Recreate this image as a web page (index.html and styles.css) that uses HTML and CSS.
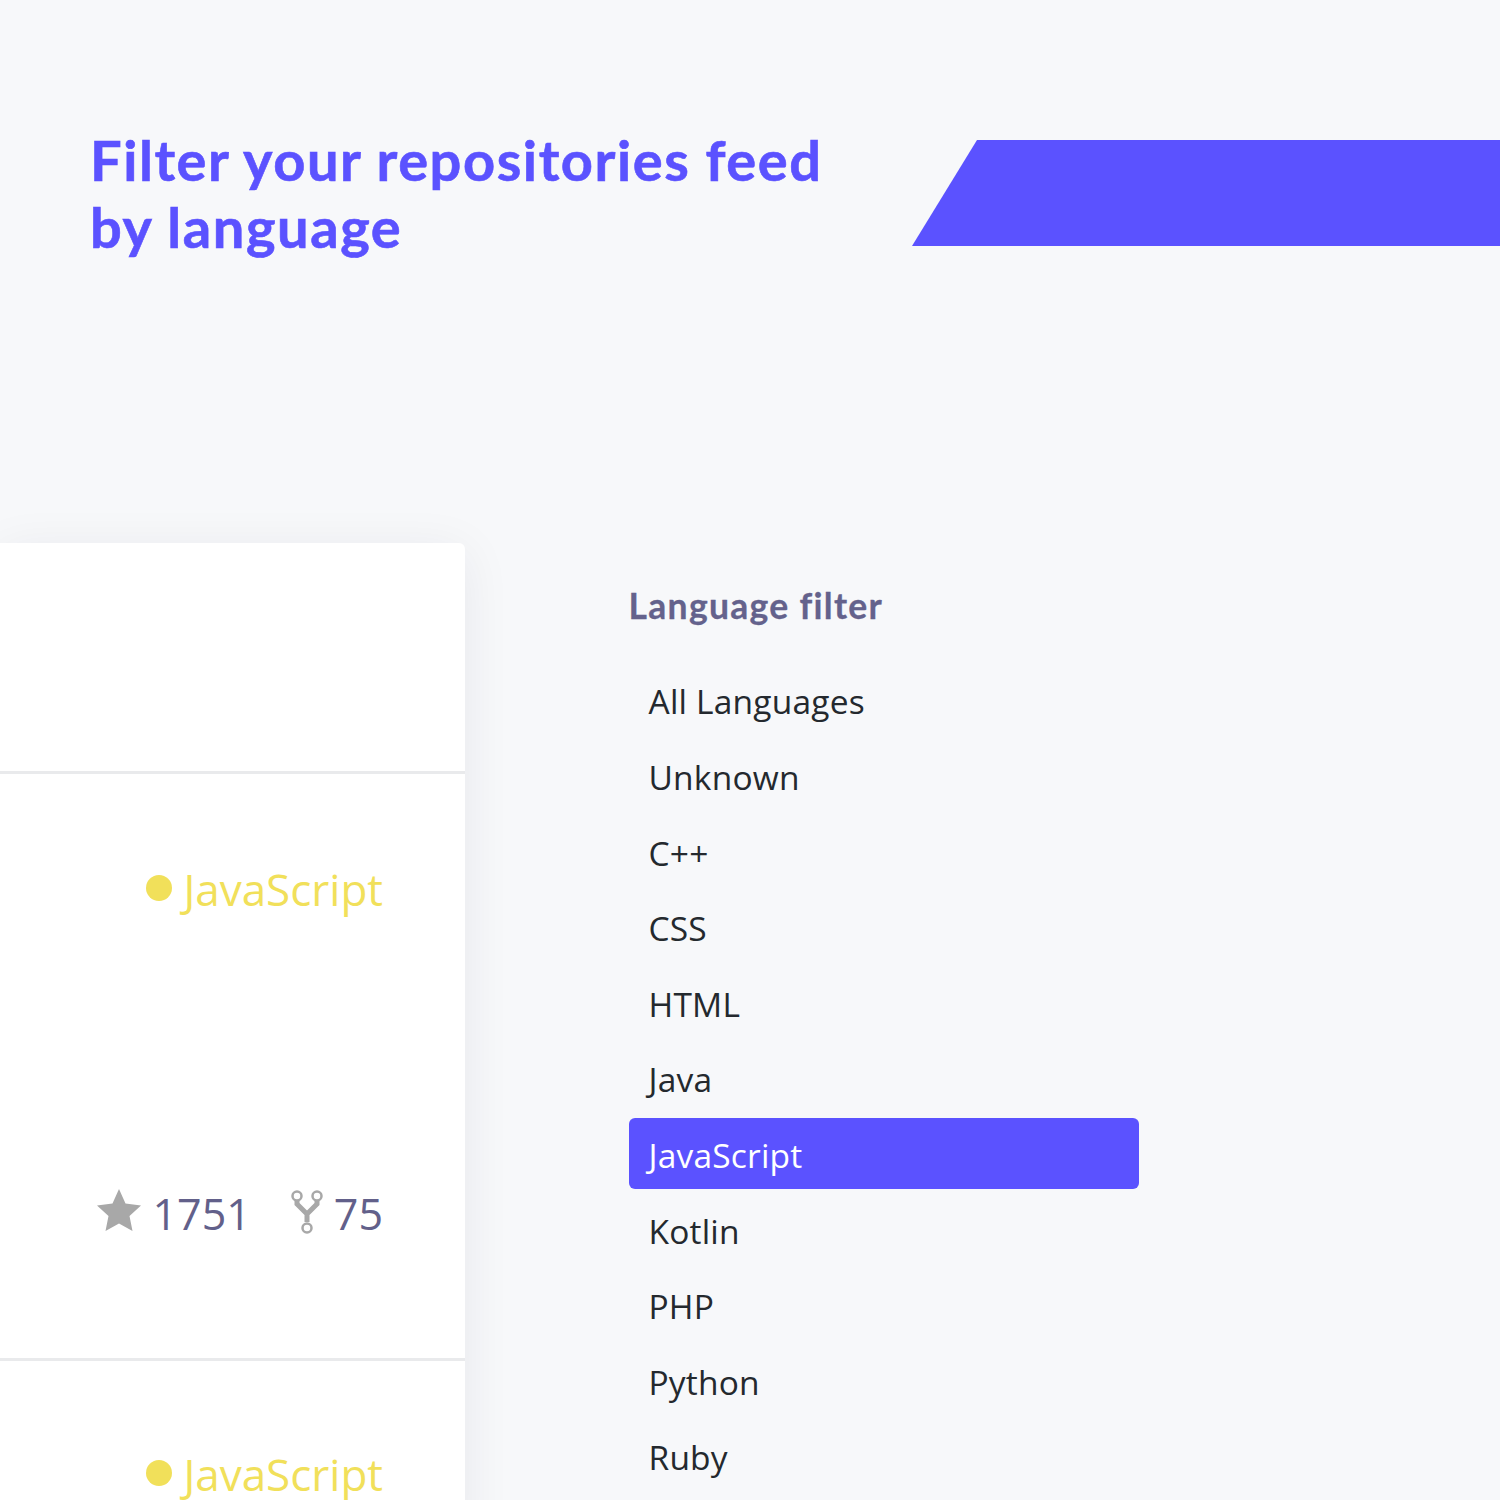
FILE: index.html
```html
<!DOCTYPE html>
<html lang="en">
<head>
<meta charset="utf-8">
<title>Filter by language</title>
<link rel="stylesheet" href="styles.css">
</head>
<body>
<div class="page">
  <header class="hero">
    <h1 class="title">Filter your repositories feed<br>by language</h1>
    <div class="ribbon"></div>
  </header>
  <main class="content">
    <section class="card">
      <div class="row row-first"></div>
      <div class="row row-repo">
        <div class="lang"><span class="dot"></span><span>JavaScript</span></div>
        <div class="stats">
          <svg class="star" viewBox="0 0 44 42" width="44" height="42"><path d="M22 0l6.5 14.5L44 16.5 32.5 27l3 15L22 34.5 8.5 42l3-15L0 16.5l15.500-2z"/></svg>
          <span class="num">1751</span>
          <svg class="fork" viewBox="0 0 32 44" width="32" height="44" fill="none"><path class="fork-stem" d="M6 11v3l10 10 10-10v-3M16 24v8"/><circle cx="6" cy="6" r="4.500"/><circle cx="26" cy="6" r="4.500"/><circle cx="16" cy="38" r="4.500"/></svg>
          <span class="num">75</span>
        </div>
      </div>
      <div class="row row-last">
        <div class="lang"><span class="dot"></span><span>JavaScript</span></div>
      </div>
    </section>
    <aside class="filter">
      <h2 class="filter-title">Language filter</h2>
      <ul class="list">
        <li class="item">All Languages</li>
        <li class="item">Unknown</li>
        <li class="item">C++</li>
        <li class="item">CSS</li>
        <li class="item">HTML</li>
        <li class="item">Java</li>
        <li class="item active">JavaScript</li>
        <li class="item">Kotlin</li>
        <li class="item">PHP</li>
        <li class="item">Python</li>
        <li class="item">Ruby</li>
      </ul>
    </aside>
  </main>
</div>
</body>
</html>
```
FILE: styles.css
```css
* { box-sizing: border-box; }
html, body { margin: 0; padding: 0; }
body { background: #f7f8fa; width: 1500px; height: 1500px; overflow: hidden; font-family: "Open Sans", "Noto Sans", sans-serif; }
.page { width: 1500px; height: 1500px; overflow: hidden; }
.hero { height: 543px; padding: 126px 0 0 90px; display: flex; align-items: flex-start; }
.title { margin: 0; width: 822px; flex: none; font-family: Lato, "Noto Sans", sans-serif; font-size: 56px; letter-spacing: 1.55px; -webkit-text-stroke: .6px #5b52ff; line-height: 67px; font-weight: 700; color: #5b52ff; }
.ribbon { margin-top: 14px; flex: 1; height: 106px; background: #5b52ff; clip-path: polygon(65px 0, 100% 0, 100% 100%, 0 100%); }
.content { display: flex; align-items: flex-start; }
.card { width: 465px; height: 1000px; background: #fff; border-top-right-radius: 6px; box-shadow: 0 8px 50px rgba(20,20,50,.07); flex: none; }
.row { border-bottom: 3px solid #e9eaec; padding-right: 82px; display: flex; flex-direction: column; align-items: flex-end; }
.row-first { height: 231px; }
.row-repo { height: 587px; }
.row-last { border-bottom: 0; }
.lang { display: flex; align-items: center; gap: 11px; color: #f1e05a; font-size: 44px; line-height: 60px; margin-top: 85px; }
.row-last .lang { margin-top: 83px; }
.dot { width: 26px; height: 26px; border-radius: 50%; background: #f1e05a; margin-bottom: 3px; }
.stats { display: flex; align-items: center; margin-top: 265px; color: #62608a; }
.num { font-size: 43px; line-height: 60px; }
.star { fill: #a8a8a8; margin: 0 11px 8px 0; }
.fork { stroke: #a8a8a8; stroke-width: 2.5; margin: 0 11px 4px 40px; }
.fork-stem { stroke-width: 5; }
.filter { margin-left: 163.500px; width: 510.500px; padding-top: 40px; }
.filter-title { margin: 0 0 35.500px; font-family: Lato, "Noto Sans", sans-serif; font-size: 35.500px; letter-spacing: 1.3px; -webkit-text-stroke: .3px #64628c; line-height: 46px; font-weight: 700; color: #64628c; }
.list { list-style: none; margin: 0; padding: 0; display: flex; flex-direction: column; gap: 5px; }
.item { height: 70.600px; padding: 1.900px 20px 0; font-size: 33.500px; letter-spacing: .2px; line-height: 70px; color: #24292e; border-radius: 6px; }
.active { background: #5b52ff; color: #fff; }
```
